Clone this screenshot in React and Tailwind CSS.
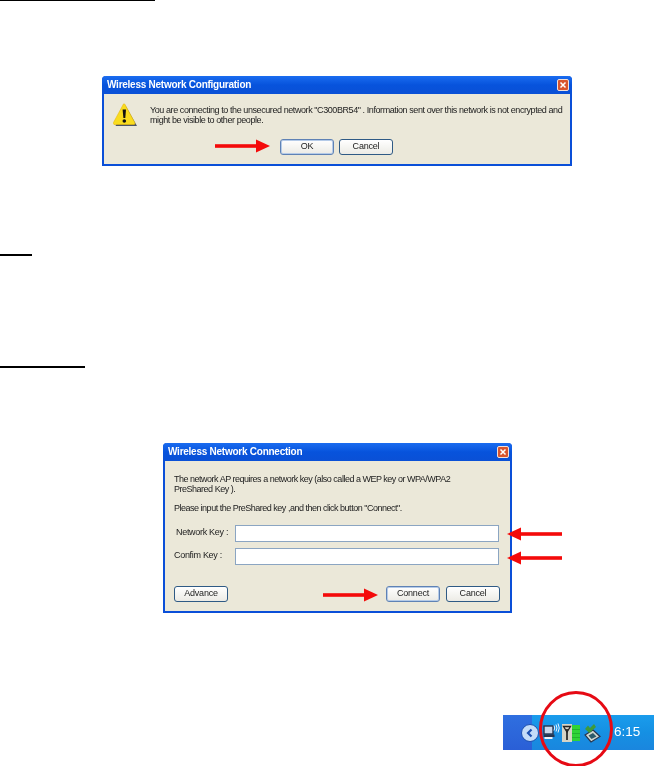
const font = { fontFamily: '"Liberation Sans", Arial, sans-serif' };

function Arrow({ className, flip }) {
  return (
    <svg className={`absolute ${className}`} width="56" height="14" viewBox="0 0 56 14">
      <g transform={flip ? "translate(56,0) scale(-1,1)" : undefined}>
        <rect x="0" y="5.2" width="43" height="3.6" fill="#f40a0a" />
        <path d="M41 0.6 L55 7 L41 13.4 Z" fill="#f40a0a" />
      </g>
    </svg>
  );
}

function CloseButton() {
  return (
    <div className="w-[12px] h-[12px] rounded-[2px] border border-[#f3e0d8] bg-[#d9552e] flex items-center justify-center">
      <svg width="8" height="8" viewBox="0 0 8 8">
        <path d="M1.5 1.5 L6.5 6.5 M6.5 1.5 L1.5 6.5" stroke="#fff" strokeWidth="1.5" />
      </svg>
    </div>
  );
}

function XpButton({ children, className = "", strong }) {
  return (
    <div
      className={`w-[54px] h-[16px] rounded-[3px] border bg-gradient-to-b from-white to-[#ecebe5] flex items-center justify-center text-[9px] tracking-[-0.2px] text-[#222] ${
        strong ? "border-[#5f82b5] shadow-[inset_0_0_0_1px_#b5cbe8]" : "border-[#2f5a85]"
      } ${className}`}
    >
      {children}
    </div>
  );
}

function Dialog({ title, className, children }) {
  return (
    <div className={`flex flex-col rounded-t-[4px] border-x-[2px] border-b-[2px] border-[#0a4fd8] bg-[#ebe8d9] ${className}`}>
      <div className="flex items-center justify-between shrink-0 -mx-[2px] rounded-t-[4px] bg-gradient-to-b from-[#1a6cf0] via-[#0753dc] to-[#0a50d6] pl-[5px] pr-[3px] h-[18px]">
        <span className="text-white font-bold text-[10px] tracking-[-0.25px] leading-none">{title}</span>
        <CloseButton />
      </div>
      {children}
    </div>
  );
}

function WarningIcon() {
  return (
    <svg width="24" height="24" viewBox="0 0 24 24">
      <path d="M12 2 L23.5 22.5 L2 22.5 Z" fill="#4d5666" transform="translate(0.5,0.5)" />
      <path d="M10.5 1 Q11.5 0.5 12 1.5 L22 20 Q22 21.5 21 21.5 L1 21.5 Q0 21 0.5 19.5 Z" fill="#f9dc1e" stroke="#e8b80c" strokeWidth="0.6" />
      <path d="M9.6 6.5 H13 L12.3 15 H10.4 Z" fill="#111" />
      <circle cx="11.3" cy="18" r="1.8" fill="#111" />
    </svg>
  );
}

function TextField() {
  return <div className="w-[264px] h-[17px] border border-[#8ba5c2] bg-white" />;
}

function TrayIcons() {
  return (
    <svg width="60" height="20" viewBox="0 0 60 20">
      <rect x="2" y="3" width="9" height="8" fill="#c9d6ea" stroke="#27344e" strokeWidth="1.4" />
      <rect x="1.5" y="11.5" width="11" height="2.5" fill="#27344e" />
      <rect x="2.5" y="14" width="8" height="2" fill="#eef2f8" />
      <path d="M12 2.5 Q13.5 5 12 7.5 M14 1.5 Q16 5 14 8.5 M16 0.5 Q18.5 5 16 9.5" stroke="#eef4ff" strokeWidth="1" fill="none" />
      <rect x="20" y="1" width="10" height="18" fill="#d6d4c6" />
      <path d="M21.5 3.5 L28.5 3.5 L25 9 Z" fill="none" stroke="#222" strokeWidth="1.3" />
      <path d="M25 6 V17" stroke="#222" strokeWidth="1.7" />
      <rect x="30" y="2" width="8" height="16" fill="#2fd436" />
      <rect x="30" y="6" width="8" height="0.8" fill="#1faa2c" />
      <rect x="30" y="10" width="8" height="0.8" fill="#1faa2c" />
      <rect x="30" y="14" width="8" height="0.8" fill="#1faa2c" />
      <path d="M43 12 L51 7 L58 13.5 L49 19 Z" fill="#cfd8d0" stroke="#27344e" strokeWidth="1.2" />
      <path d="M46.5 12.5 L51 10 L54.5 13.5 L49.5 16 Z" fill="#2d5a6a" />
      <path d="M43 6 L46 2.5 L48 5 L52 1 L54 4 L47.5 10 Z" fill="#3f9a3a" />
    </svg>
  );
}

export default function App() {
  return (
    <div className="relative w-[654px] h-[766px] bg-white overflow-hidden flex flex-col" style={font}>
      <div className="h-px w-[155px] bg-black" />

      <div className="relative mt-[75px] ml-[102px] w-[470px] blur-[0.3px]">
        <Dialog title="Wireless Network Configuration" className="h-[90px]">
          <div className="flex pl-[9px] pt-[9px] gap-[13px]">
            <WarningIcon />
            <p className="text-[9px] leading-[10px] text-[#222] pt-[2px] w-[420px] tracking-[-0.42px]">
              You are connecting to the unsecured network "C300BR54" . Information sent over this network is not encrypted and might be visible to other people.
            </p>
          </div>
          <div className="flex gap-[5px] ml-[176px] mt-[12px]">
            <XpButton strong>OK</XpButton>
            <XpButton>Cancel</XpButton>
          </div>
        </Dialog>
        <Arrow className="left-[113px] top-[63px]" />
      </div>

      <div className="h-[2px] w-[32px] bg-black mt-[88px]" />
      <div className="h-[2px] w-[85px] bg-black mt-[110px]" />

      <div className="relative mt-[75px] ml-[163px] w-[349px] blur-[0.3px]">
        <Dialog title="Wireless Network Connection" className="h-[170px]">
          <div className="px-[9px] pt-[14px] text-[9px] text-[#222] leading-[9.5px] tracking-[-0.49px] whitespace-nowrap">
            <p>The network AP requires a network key (also called a WEP key or WPA/WPA2</p>
            <p>PreShared Key ).</p>
            <p className="mt-[10px]">Please input the PreShared key ,and then click button "Connect".</p>
          </div>
          <div className="flex flex-col gap-[6px] mt-[11px] pl-[9px] text-[9px] tracking-[-0.3px] text-[#222]">
            <div className="flex items-center">
              <span className="w-[61px] pl-[2px] whitespace-nowrap">Network Key :</span>
              <TextField />
            </div>
            <div className="flex items-center">
              <span className="w-[61px] whitespace-nowrap">Confim Key :</span>
              <TextField />
            </div>
          </div>
          <div className="flex items-center mt-[21px] pl-[9px] pr-[10px]">
            <XpButton>Advance</XpButton>
            <div className="flex-1" />
            <XpButton strong>Connect</XpButton>
            <XpButton className="ml-[6px]">Cancel</XpButton>
          </div>
        </Dialog>
        <Arrow flip className="left-[343px] top-[84px]" />
        <Arrow flip className="left-[343px] top-[108px]" />
        <Arrow className="left-[160px] top-[145px]" />
      </div>

      <div className="relative mt-[102px] ml-[503px] w-[151px] h-[35px] flex items-center bg-gradient-to-b from-[#1a9cec] via-[#1590e3] to-[#1a86de]">
        <div className="w-[29px] self-stretch bg-gradient-to-b from-[#2f6fe0] to-[#2a5fd6]" />
        <div className="-ml-[11px] w-[18px] h-[18px] rounded-full bg-[#c4dcf8] border border-[#1b4fb0] flex items-center justify-center">
          <svg width="10" height="10" viewBox="0 0 10 10">
            <path d="M6.5 1.5 L3 5 L6.5 8.5" fill="none" stroke="#1b4fb0" strokeWidth="2.2" />
          </svg>
        </div>
        <div className="ml-[3px]"><TrayIcons /></div>
        <span className="ml-[12px] text-white text-[13.5px] blur-[0.3px]">6:15</span>
        <svg className="absolute left-[36px] -top-[24px]" width="74" height="76" viewBox="0 0 74 76">
          <ellipse cx="37" cy="38" rx="35.5" ry="36.5" fill="none" stroke="#e60a14" strokeWidth="3" />
        </svg>
      </div>
    </div>
  );
}
